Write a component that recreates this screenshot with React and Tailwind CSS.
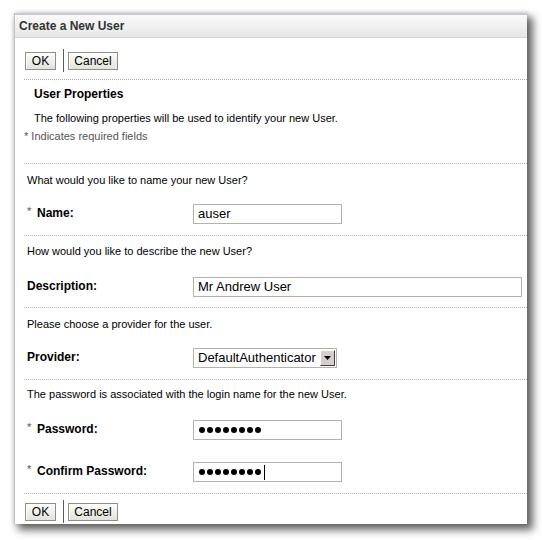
export default function App() {
  const Btn = ({ children, w }) => (
    <div
      className={`${w} h-[18px] flex items-center justify-center border border-[#8f8f8a] bg-gradient-to-b from-[#fdfdfb] to-[#e3e3dc] text-[12px] leading-none text-black shadow-[inset_1px_1px_0_#ffffff]`}
    >
      {children}
    </div>
  );
  const ButtonRow = () => (
    <div className="flex items-center ml-[10px]">
      <Btn w="w-[31px]">OK</Btn>
      <div className="w-px h-[23px] bg-[#5a5a5a] ml-[7px] mr-[4px]" />
      <Btn w="w-[50px]">Cancel</Btn>
    </div>
  );
  const Hr = () => <div className="ml-[9px] border-t border-dotted border-[#b4b4b4]" />;
  const Line = ({ children, className = "" }) => (
    <div className={`h-[18px] leading-[18px] whitespace-nowrap ${className}`}>{children}</div>
  );
  const Label = ({ req, children }) => (
    <div className="w-[166px] flex items-center h-[18px] -mt-[3px] whitespace-nowrap">
      {req && <span className="text-[#555] text-[11px] w-[10px] -mt-[2px]">*</span>}
      <span className="font-bold text-[12px]">{children}</span>
    </div>
  );
  const Input = ({ w, children }) => (
    <div
      className={`${w} h-[20px] border border-[#b3b3aa] bg-white flex items-center pl-[4px] text-[13px] font-['Liberation_Sans',Arial,sans-serif] text-black whitespace-nowrap`}
    >
      {children}
    </div>
  );
  const Dots = ({ caret }) => (
    <div className="flex items-center gap-[2px] pl-[1px]">
      {Array.from({ length: 8 }).map((_, i) => (
        <div key={i} className="w-[6px] h-[6px] rounded-full bg-black" />
      ))}
      {caret && <div className="w-px h-[15px] bg-black ml-[1px]" />}
    </div>
  );

  return (
    <div className="w-[542px] min-h-[540px] bg-white pt-[13px] pl-[14px] font-['Liberation_Sans',Arial,sans-serif] text-[11px] text-black">
      <div className="w-[513px] h-[511px] bg-white border-l border-[#bfc3c6] flex flex-col shadow-[0_0_4px_rgba(0,0,0,0.15),5px_5px_8px_1px_rgba(0,0,0,0.6)]">
        <div className="h-[25px] shrink-0 border-t-2 border-t-[#c3cbd1] border-b border-b-[#d4d6d4] bg-gradient-to-b from-[#fbfbfb] to-[#e5e7e5] flex items-center pl-[4px] text-[12px] font-bold text-[#333]">
          Create a New User
        </div>

        <div className="h-[41px] shrink-0 pt-[11px]">
          <ButtonRow />
        </div>
        <Hr />

        <div className="h-[83px] shrink-0 pt-[5px]">
          <Line className="ml-[19px] font-bold text-[12px]">User Properties</Line>
          <Line className="ml-[19px] mt-[6px]">
            The following properties will be used to identify your new User.
          </Line>
          <Line className="ml-[9px] text-[#555]">* Indicates required fields</Line>
        </div>
        <Hr />

        <div className="h-[71px] shrink-0 pt-[7px] pl-[12px]">
          <Line>What would you like to name your new User?</Line>
          <div className="flex items-center mt-[15px]">
            <Label req>Name:</Label>
            <Input w="w-[149px]">auser</Input>
          </div>
        </div>
        <Hr />

        <div className="h-[71px] shrink-0 pt-[6px] pl-[12px]">
          <Line>How would you like to describe the new User?</Line>
          <div className="flex items-center mt-[17px]">
            <Label>Description:</Label>
            <Input w="w-[329px]">Mr Andrew User</Input>
          </div>
        </div>
        <Hr />

        <div className="h-[71px] shrink-0 pt-[7px] pl-[12px]">
          <Line>Please choose a provider for the user.</Line>
          <div className="flex items-center mt-[15px]">
            <Label>Provider:</Label>
            <div className="w-[144px] h-[20px] border border-[#b3b3aa] bg-white flex items-center pl-[4px] text-[13px] whitespace-nowrap">
              <span className="flex-1">DefaultAuthenticator</span>
              <div className="w-[15px] h-[16px] mr-[1px] bg-[#d4d0c8] border border-t-white border-l-white border-r-[#404040] border-b-[#404040] flex items-center justify-center">
                <svg width="7" height="4" viewBox="0 0 7 4">
                  <polygon points="0,0 7,0 3.5,4" fill="#000" />
                </svg>
              </div>
            </div>
          </div>
        </div>
        <Hr />

        <div className="h-[113px] shrink-0 pt-[5px] pl-[12px]">
          <Line>The password is associated with the login name for the new User.</Line>
          <div className="flex items-center mt-[17px]">
            <Label req>Password:</Label>
            <Input w="w-[149px]">
              <Dots />
            </Input>
          </div>
          <div className="flex items-center mt-[22px]">
            <Label req>Confirm Password:</Label>
            <Input w="w-[149px]">
              <Dots caret />
            </Input>
          </div>
        </div>
        <Hr />

        <div className="h-[30px] shrink-0 pt-[6px]">
          <ButtonRow />
        </div>
      </div>
    </div>
  );
}
